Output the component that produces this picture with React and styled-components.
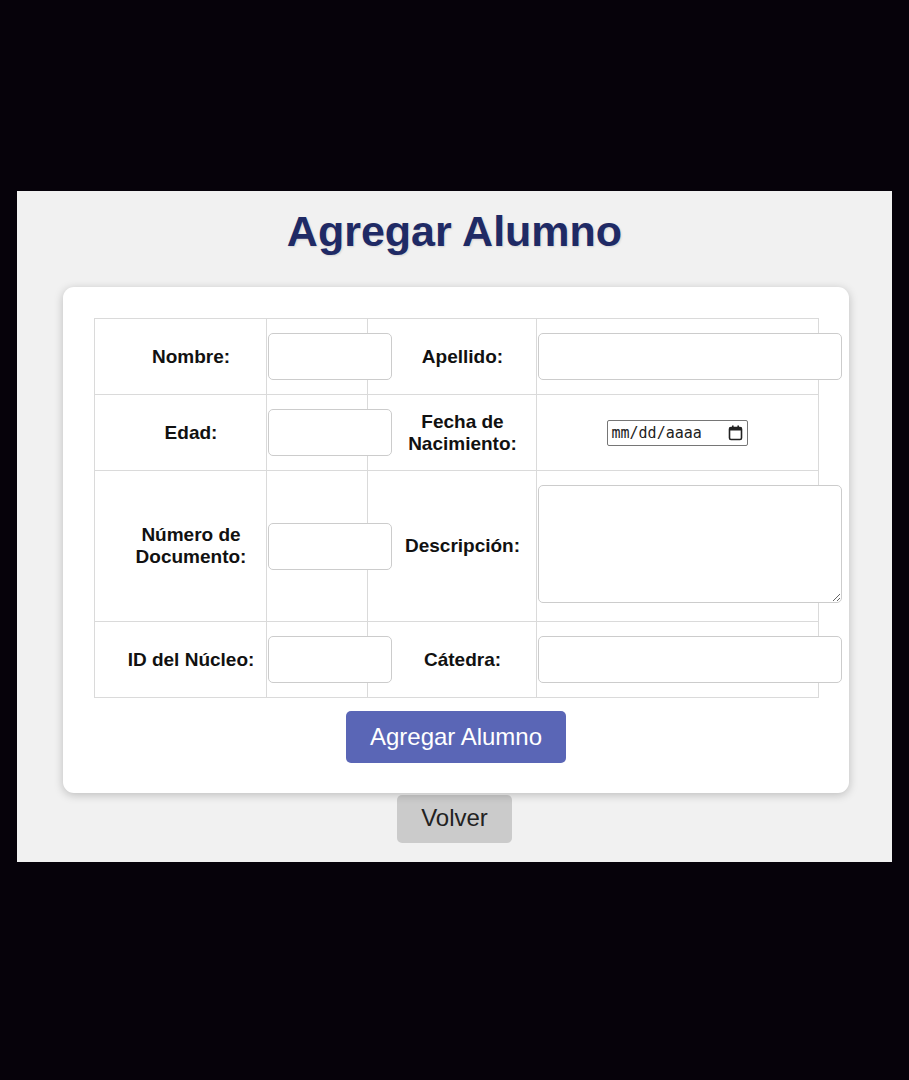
import React from "react";
import styled, { createGlobalStyle } from "styled-components";

const GlobalStyle = createGlobalStyle`
  html, body {
    margin: 0;
    background: #06020a;
  }
  body {
    font-family: "Liberation Sans", Arial, sans-serif;
    min-height: 1080px;
  }
`;

const Screen = styled.div`
  padding: 191px 0 0 17px;
`;

const Panel = styled.main`
  width: 875px;
  box-sizing: border-box;
  background: #f1f1f1;
  padding: 16px 0 19px;
  display: flex;
  flex-direction: column;
  align-items: center;
`;

const Title = styled.h1`
  margin: 0;
  font-size: 43px;
  line-height: 49px;
  font-weight: bold;
  color: #1f2a65;
  text-shadow: 1px 1px 2px rgba(0, 0, 0, 0.12);
`;

const Card = styled.form`
  width: 786px;
  box-sizing: border-box;
  margin: 31px 0 0 3px;
  padding: 31px 31px 30px;
  background: #ffffff;
  border-radius: 11px;
  box-shadow: 0 2px 10px rgba(0, 0, 0, 0.22);
  display: flex;
  flex-direction: column;
  align-items: center;
  position: relative;
  z-index: 1;
`;

const Table = styled.table`
  width: 724px;
  border-collapse: collapse;
  table-layout: fixed;
  border: 1px solid #dadada;
`;

const Row = styled.tr`
  height: ${(p) => p.$h}px;
`;

const Label = styled.td`
  border: 1px solid #dadada;
  padding: 0 0 0 22px;
  text-align: center;
  vertical-align: middle;
  font-size: 19px;
  line-height: 22px;
  font-weight: bold;
  color: #111;
`;

const Field = styled.td`
  border: 1px solid #dadada;
  padding: 0 1px;
  vertical-align: middle;
  text-align: ${(p) => (p.$center ? "center" : "left")};
`;

const TextInput = styled.input`
  display: block;
  width: ${(p) => p.$w}px;
  height: 47px;
  box-sizing: border-box;
  border: 1px solid #cccccc;
  border-radius: 5px;
  padding: 10px;
  font-size: 16px;
  font-family: inherit;
  background: #fff;
  position: relative;
`;

const TextArea = styled.textarea`
  display: block;
  width: 304px;
  height: 118px;
  margin-bottom: 4px;
  box-sizing: border-box;
  border: 1px solid #cccccc;
  border-radius: 5px;
  padding: 10px;
  font-size: 16px;
  font-family: inherit;
  position: relative;
`;

const DateBox = styled.div`
  display: inline-flex;
  align-items: center;
  justify-content: space-between;
  width: 141px;
  height: 26px;
  box-sizing: border-box;
  padding: 0 4px 0 4px;
  border: 1px solid #767676;
  border-radius: 2px;
  font-family: "DejaVu Sans Mono", "Liberation Mono", monospace;
  font-size: 15px;
  color: #222;
`;

const SubmitButton = styled.button`
  margin-top: 13px;
  height: 52px;
  padding: 0 24px;
  border: none;
  border-radius: 5px;
  background: #5a66b6;
  color: #ffffff;
  font-family: inherit;
  font-size: 24px;
`;

const BackButton = styled.button`
  margin-top: 2px;
  height: 48px;
  padding: 0 24px 3px;
  border: none;
  border-radius: 5px;
  background: #cbcbcb;
  color: #222;
  font-family: inherit;
  font-size: 24px;
`;

const CalendarIcon = () => (
  <svg width="15" height="16" viewBox="0 0 15 16">
    <rect x="1.5" y="2.5" width="12" height="12" rx="1.5" fill="none" stroke="#222" strokeWidth="1.6" />
    <rect x="1.5" y="2.5" width="12" height="3" fill="#222" />
    <rect x="4" y="0.5" width="1.6" height="3" fill="#222" />
    <rect x="9.4" y="0.5" width="1.6" height="3" fill="#222" />
  </svg>
);

export default function App() {
  return (
    <>
      <GlobalStyle />
      <Screen>
        <Panel>
          <Title>Agregar Alumno</Title>
          <Card onSubmit={(e) => e.preventDefault()}>
            <Table>
              <colgroup>
                <col style={{ width: 172 }} />
                <col style={{ width: 101 }} />
                <col style={{ width: 169 }} />
                <col style={{ width: 282 }} />
              </colgroup>
              <tbody>
                <Row $h={76}>
                  <Label>Nombre:</Label>
                  <Field>
                    <TextInput type="text" $w={124} />
                  </Field>
                  <Label>Apellido:</Label>
                  <Field>
                    <TextInput type="text" $w={304} />
                  </Field>
                </Row>
                <Row $h={76}>
                  <Label>Edad:</Label>
                  <Field>
                    <TextInput type="text" $w={124} />
                  </Field>
                  <Label>Fecha de Nacimiento:</Label>
                  <Field $center>
                    <DateBox>
                      <span>mm/dd/aaaa</span>
                      <CalendarIcon />
                    </DateBox>
                  </Field>
                </Row>
                <Row $h={151}>
                  <Label>Número de Documento:</Label>
                  <Field>
                    <TextInput type="text" $w={124} />
                  </Field>
                  <Label>Descripción:</Label>
                  <Field>
                    <TextArea />
                  </Field>
                </Row>
                <Row $h={76}>
                  <Label>ID del Núcleo:</Label>
                  <Field>
                    <TextInput type="text" $w={124} />
                  </Field>
                  <Label>Cátedra:</Label>
                  <Field>
                    <TextInput type="text" $w={304} />
                  </Field>
                </Row>
              </tbody>
            </Table>
            <SubmitButton type="submit">Agregar Alumno</SubmitButton>
          </Card>
          <BackButton type="button">Volver</BackButton>
        </Panel>
      </Screen>
    </>
  );
}
